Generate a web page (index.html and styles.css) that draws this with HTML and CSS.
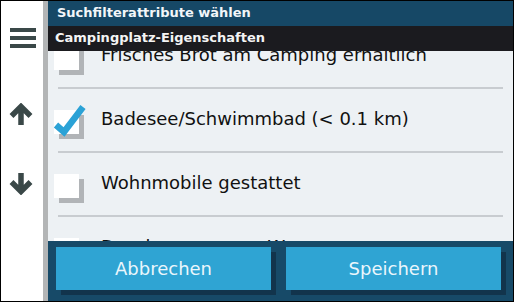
FILE: index.html
```html
<!DOCTYPE html>
<html lang="de">
<head>
<meta charset="utf-8">
<title>Suchfilterattribute wählen</title>
<link rel="stylesheet" href="styles.css">
</head>
<body>
<div class="screen">
  <aside class="sidebar">
    <svg class="icon menu" width="26" height="20" viewBox="0 0 26 20">
      <rect x="0" y="0" width="26" height="4" fill="#3a4848"/>
      <rect x="0" y="8" width="26" height="4" fill="#3a4848"/>
      <rect x="0" y="16" width="26" height="4" fill="#3a4848"/>
    </svg>
    <svg class="icon up" width="26" height="22" viewBox="0 0 26 22">
      <path d="M13 22V5 M3.5 13 L13 3.5 L22.5 13" fill="none" stroke="#3a4848" stroke-width="5.5"/>
    </svg>
    <svg class="icon down" width="26" height="22" viewBox="0 0 26 22">
      <path d="M13 0V17 M3.5 9 L13 18.5 L22.5 9" fill="none" stroke="#3a4848" stroke-width="5.5"/>
    </svg>
  </aside>
  <div class="divider"></div>
  <main class="main">
    <header class="header">
      <div class="title">Suchfilterattribute wählen</div>
      <div class="subtitle">Campingplatz-Eigenschaften</div>
    </header>
    <div class="list">
      <div class="list-inner">
        <div class="row">
          <span class="box"></span>
          <span class="label">Frisches Brot am Camping erhältlich</span>
        </div>
        <div class="sep"></div>
        <div class="row">
          <span class="box checked">
            <svg class="check" width="34" height="32" viewBox="-2 -6 34 32">
              <path d="M2 15 L10 22 L29 -3" fill="none" stroke="#2ba2d6" stroke-width="6.5"/>
            </svg>
          </span>
          <span class="label">Badesee/Schwimmbad (&lt; 0.1 km)</span>
        </div>
        <div class="sep"></div>
        <div class="row">
          <span class="box"></span>
          <span class="label">Wohnmobile gestattet</span>
        </div>
        <div class="sep"></div>
        <div class="row">
          <span class="box"></span>
          <span class="label">Duschen, warmes Wasser</span>
        </div>
      </div>
    </div>
    <footer class="footer">
      <button class="btn">Abbrechen</button>
      <button class="btn">Speichern</button>
    </footer>
  </main>
</div>
</body>
</html>
```
FILE: styles.css
```css
* { box-sizing: border-box; }
html, body { margin: 0; padding: 0; background: #000; }
body { font-family: "DejaVu Sans", sans-serif; }

.screen {
  width: 514px;
  height: 302px;
  border: 1px solid #000;
  display: flex;
  background: #fff;
  overflow: hidden;
}

.sidebar {
  width: 42px;
  background: #fff;
  display: flex;
  flex-direction: column;
  align-items: flex-start;
  padding-top: 27px;
}
.icon { display: block; flex: none; }
.menu { margin-left: 9px; }
.up { margin-left: 7px; margin-top: 55px; }
.down { margin-left: 7px; margin-top: 48px; }

.divider {
  width: 5px;
  background: #b3b5b6;
}

.main {
  flex: 1;
  display: flex;
  flex-direction: column;
  background: #edf1f4;
  min-width: 0;
}

.header { flex: none; }
.title {
  height: 25px;
  line-height: 23px;
  background: #164866;
  color: #f2f6f9;
  font-weight: bold;
  font-size: 13px;
  padding-left: 9px;
}
.subtitle {
  height: 25px;
  line-height: 23px;
  background: #1b1b1f;
  color: #f4f4f4;
  font-weight: bold;
  font-size: 13px;
  padding-left: 7px;
}

.list {
  flex: 1;
  overflow: hidden;
}
.list-inner { margin-top: -26px; }

.row {
  height: 62px;
  display: flex;
  align-items: flex-start;
  padding-left: 6px;
}
.sep {
  height: 2px;
  margin: 0 10px;
  background: #c8ccd0;
}

.box {
  position: relative;
  flex: none;
  width: 25px;
  height: 24px;
  margin-top: 21px;
  background: #fff;
  box-shadow: 5px 5px 0 #b1b4b7;
}
.check {
  position: absolute;
  left: -2px;
  top: -6px;
  overflow: visible;
}

.label {
  margin-left: 22px;
  margin-top: 19px;
  font-size: 18px;
  line-height: 22px;
  color: #111;
  white-space: nowrap;
}

.footer {
  flex: none;
  height: 60px;
  background: #174a68;
  display: flex;
  gap: 15px;
  padding: 6px 0 0 8px;
}
.btn {
  width: 215px;
  height: 43px;
  border: none;
  border-radius: 0;
  background: #2fa4d3;
  box-shadow: 5px 5px 0 #12344c;
  color: #eaf6fc;
  font-family: "DejaVu Sans", sans-serif;
  font-size: 18px;
  line-height: 41px;
  padding: 0;
}
```
